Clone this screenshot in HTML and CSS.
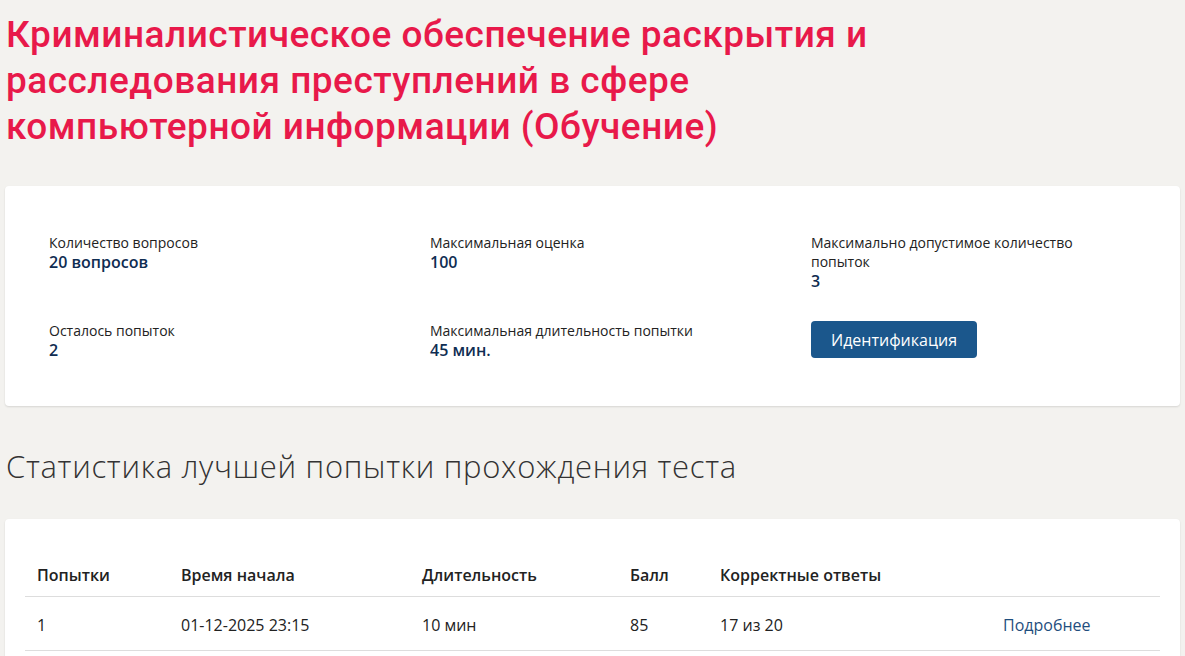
FILE: index.html
```html
<!DOCTYPE html>
<html lang="ru">
<head>
<meta charset="UTF-8">
<meta name="viewport" content="width=device-width, initial-scale=1.0">
<title>Тест</title>
<link rel="stylesheet" href="styles.css">
</head>
<body>
<div class="page">
    <h1 class="title">Криминалистическое обеспечение раскрытия и<br>расследования преступлений в сфере<br>компьютерной информации (Обучение)</h1>

    <div class="card info">
        <div class="item">
            <div class="label">Количество вопросов</div>
            <div class="value">20 вопросов</div>
        </div>
        <div class="item">
            <div class="label">Максимальная оценка</div>
            <div class="value">100</div>
        </div>
        <div class="item">
            <div class="label">Максимально допустимое количество попыток</div>
            <div class="value">3</div>
        </div>
        <div class="item">
            <div class="label">Осталось попыток</div>
            <div class="value">2</div>
        </div>
        <div class="item">
            <div class="label">Максимальная длительность попытки</div>
            <div class="value">45 мин.</div>
        </div>
        <div class="item">
            <button class="btn">Идентификация</button>
        </div>
    </div>

    <h2 class="subtitle">Статистика лучшей попытки прохождения теста</h2>

    <div class="card stats">
        <table>
            <thead>
                <tr>
                    <th class="c1">Попытки</th>
                    <th class="c2">Время начала</th>
                    <th class="c3">Длительность</th>
                    <th class="c4">Балл</th>
                    <th class="c5">Корректные ответы</th>
                    <th class="c6"></th>
                </tr>
            </thead>
            <tbody>
                <tr>
                    <td>1</td>
                    <td>01-12-2025 23:15</td>
                    <td>10 мин</td>
                    <td>85</td>
                    <td>17 из 20</td>
                    <td><a href="#">Подробнее</a></td>
                </tr>
            </tbody>
        </table>
    </div>
</div>
</body>
</html>
```

FILE: styles.css
```css
* {
    margin: 0;
    padding: 0;
    box-sizing: border-box;
}

body {
    background: #f3f2ef;
    font-family: "Open Sans", "Noto Sans", sans-serif;
    color: #222;
}

.page {
    padding: 12px 5px 40px;
}

.title {
    color: #e8194a;
    font-family: "Roboto", sans-serif;
    font-weight: 500;
    font-size: 37px;
    letter-spacing: 0.5px;
    line-height: 46px;
    padding-left: 1px;
}

.card {
    background: #fff;
    border-radius: 4px;
    box-shadow: 0 1px 2px rgba(0, 0, 0, 0.12);
}

/* блок с параметрами теста */
.info {
    margin-top: 36px;
    display: grid;
    grid-template-columns: repeat(3, 300px);
    column-gap: 81px;
    row-gap: 29px;
    padding: 47px 44px 45px;
}

.label {
    font-size: 14px;
    line-height: 19px;
}

.value {
    font-size: 16px;
    line-height: 21px;
    font-weight: 600;
    color: #0f2d52;
}

.btn {
    display: block;
    background: #1b578c;
    color: #fff;
    border: none;
    border-radius: 4px;
    font-family: inherit;
    font-size: 16px;
    height: 37px;
    padding: 0 20px;
}

.subtitle {
    font-weight: 300;
    font-size: 31px;
    letter-spacing: 0.7px;
    line-height: 40px;
    color: #333;
    margin: 40px 0 0 1px;
}

/* таблица статистики */
.stats {
    margin-top: 33px;
    padding: 38px 20px 20px;
}

table {
    width: 100%;
    border-collapse: collapse;
    table-layout: fixed;
}

th {
    text-align: left;
    font-size: 16px;
    font-weight: 600;
    padding: 8px 12px 10px;
    line-height: 21px;
}

td {
    font-size: 16px;
    line-height: 21px;
    padding: 18px 12px 14px;
    border-top: 1px solid #ddd;
    border-bottom: 1px solid #ddd;
}

.c1 { width: 144px; }
.c2 { width: 241px; }
.c3 { width: 208px; }
.c4 { width: 90px; }
.c5 { width: 283px; }

td a {
    color: #1f4e7e;
    text-decoration: none;
}
```
